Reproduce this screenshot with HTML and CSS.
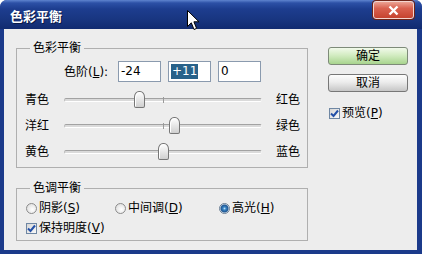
FILE: index.html
```html
<!DOCTYPE html>
<html lang="zh-CN">
<head>
    <meta charset="UTF-8">
    <title>色彩平衡</title>
    <link rel="stylesheet" href="styles.css">
</head>
<body>
    <div class="window">
        <div class="titlebar">
            <span class="title">色彩平衡</span>
            <button class="close-btn">
                <svg width="13" height="11" viewBox="0 0 13 11"><path d="M2.5 1.5 L10.5 9.5 M10.5 1.5 L2.5 9.5" stroke="#fff" stroke-width="2.4"/></svg>
            </button>
        </div>
        <div class="dialog">
            <div class="main">
                <!-- 色彩平衡 -->
                <fieldset class="group">
                    <legend>色彩平衡</legend>
                    <div class="group-body">
                        <div class="levels">
                            <label>色阶(<u>L</u>):</label>
                            <span class="field">-24</span>
                            <span class="field"><span class="selected">+11</span></span>
                            <span class="field">0</span>
                        </div>
                        <div class="sliders">
                            <div class="slider-row">
                                <span>青色</span>
                                <div class="track"><i class="tick"></i><i class="thumb" style="left: 38%"></i></div>
                                <span class="right-label">红色</span>
                            </div>
                            <div class="slider-row">
                                <span>洋红</span>
                                <div class="track"><i class="tick"></i><i class="thumb" style="left: 55.5%"></i></div>
                                <span class="right-label">绿色</span>
                            </div>
                            <div class="slider-row">
                                <span>黄色</span>
                                <div class="track"><i class="tick"></i><i class="thumb" style="left: 50%"></i></div>
                                <span class="right-label">蓝色</span>
                            </div>
                        </div>
                    </div>
                </fieldset>

                <!-- 色调平衡 -->
                <fieldset class="group group-tone">
                    <legend>色调平衡</legend>
                    <div class="group-body">
                        <div class="radios">
                            <label class="option"><span class="radio"></span>阴影(<u>S</u>)</label>
                            <label class="option"><span class="radio"></span>中间调(<u>D</u>)</label>
                            <label class="option"><span class="radio checked"></span>高光(<u>H</u>)</label>
                        </div>
                        <label class="option check-row">
                            <span class="checkbox"><svg width="9" height="9" viewBox="0 0 9 9"><path d="M1 4.5 L3.5 7 L8 1.5" fill="none" stroke="#2350a8" stroke-width="2"/></svg></span>保持明度(<u>V</u>)
                        </label>
                    </div>
                </fieldset>
            </div>

            <div class="side">
                <button class="btn btn-default">确定</button>
                <button class="btn">取消</button>
                <label class="option preview">
                    <span class="checkbox"><svg width="9" height="9" viewBox="0 0 9 9"><path d="M1 4.5 L3.5 7 L8 1.5" fill="none" stroke="#2350a8" stroke-width="2"/></svg></span>预览(<u>P</u>)
                </label>
            </div>
        </div>

        <svg class="cursor" width="13" height="21" viewBox="0 0 13 21">
            <path d="M0.5 0.5 L0.5 16.5 L4.3 12.8 L7 19.5 L9.6 18.4 L6.9 11.8 L12 11.8 Z" fill="#fff" stroke="#000" stroke-width="1"/>
        </svg>
    </div>
</body>
</html>
```

FILE: styles.css
```css
* {
    margin: 0;
    padding: 0;
    box-sizing: border-box;
}
body {
    width: 422px;
    height: 254px;
    overflow: hidden;
    font-family: "DejaVu Sans", "Noto Sans CJK SC", sans-serif;
    font-size: 12px;
    line-height: 16px;
    color: #000;
}
u {
    text-decoration: underline;
}
.window {
    position: relative;
    width: 422px;
    height: 254px;
    display: flex;
    flex-direction: column;
    padding: 0 5px 4px 4px;
    background: #1b3a8a;
    border-radius: 7px 7px 0 0;
}

/* 标题栏 */
.titlebar {
    flex: none;
    height: 29px;
    margin: 0 -5px 0 -4px;
    padding: 0 8px 0 10px;
    display: flex;
    align-items: flex-start;
    background: linear-gradient(#5f84cf 0, #2c50a6 3px, #1d3d8f 9px, #18357f 20px, #112b70 29px);
    border-radius: 7px 7px 0 0;
}
.title {
    margin-top: 8px;
    font: bold 13px/16px "Noto Sans CJK SC", sans-serif;
    color: #fff;
    text-shadow: 1px 1px #0a1a48;
}
.close-btn {
    margin: 1px 0 0 auto;
    width: 41px;
    height: 18px;
    display: flex;
    align-items: center;
    justify-content: center;
    border: 1px solid #f4d6d0;
    border-radius: 3px;
    background: linear-gradient(#eba293, #d9614f 40%, #c6432f);
    box-shadow: 0 0 0 1px #6d2418;
}

/* 对话框主体 */
.dialog {
    flex: 1;
    display: flex;
    padding: 11px 0 0 12px;
    background: #ededed;
}
.main {
    width: 292px;
    flex: none;
}
.group {
    border: 1px solid #afafaf;
    padding: 0;
}
.group legend {
    margin-left: 13px;
    padding: 0 3px;
    line-height: 16px;
}
.group-body {
    padding: 5px 0 2px 8px;
    white-space: nowrap;
}
.group-tone {
    margin-top: 12px;
}
.group-tone .group-body {
    padding: 4px 0 4px 8px;
}

/* 色阶输入 */
.levels {
    display: flex;
    align-items: center;
    height: 21px;
    padding-left: 39px;
}
.levels label {
    width: 54px;
}
.field {
    width: 43px;
    height: 21px;
    margin-left: 7px;
    padding-left: 2px;
    line-height: 19px;
    background: #fff;
    border: 1px solid #8a9aae;
}
.levels label + .field {
    margin-left: 0;
}
.selected {
    display: inline-block;
    padding: 0 1px;
    line-height: 15px;
    background: #27618a;
    color: #fff;
}

/* 滑块 */
.sliders {
    margin-top: 5px;
}
.slider-row {
    display: grid;
    grid-template-columns: 39px 198px auto;
    align-items: center;
    height: 26px;
}
.right-label {
    margin-left: 14px;
}
.track {
    position: relative;
    height: 4px;
    background: #dadada;
    border-top: 1px solid #a2a2a2;
    border-bottom: 1px solid #fff;
    border-left: 1px solid #bcbcbc;
    border-right: 1px solid #f4f4f4;
    border-radius: 2px;
}
.tick {
    position: absolute;
    left: 50%;
    top: -2px;
    width: 1px;
    height: 6px;
    background: #9a9a9a;
}
.thumb {
    position: absolute;
    top: -8px;
    width: 11px;
    height: 17px;
    margin-left: -5px;
    border: 1px solid #767676;
    border-radius: 5px 5px 2px 2px / 6px 6px 2px 2px;
    background: linear-gradient(#ffffff, #ececec 40%, #cfcfcf);
    box-shadow: inset 1px 1px #fff;
}

/* 单选 / 复选 */
.radios {
    display: grid;
    grid-template-columns: 89px 104px auto;
    height: 16px;
}
.option {
    display: flex;
    align-items: center;
    height: 16px;
}
.check-row {
    margin-top: 4px;
}
.radio {
    width: 11px;
    height: 11px;
    margin: 0 2px 0 1px;
    border: 1px solid #8c8c8c;
    border-radius: 50%;
    background: radial-gradient(circle at 60% 60%, #fff, #e3e3e3 70%, #cfcfcf);
}
.radio.checked {
    border-color: #6b7f95;
    background: radial-gradient(circle at 50% 50%, #bfe0f8 0, #3a86c4 1.5px, #1f5592 3.5px, #dce6ee 4.5px, #f4f4f4);
}
.checkbox {
    width: 11px;
    height: 11px;
    margin: 0 2px 0 1px;
    display: flex;
    align-items: center;
    justify-content: center;
    border: 1px solid #6f87a3;
    background: linear-gradient(135deg, #d6d6d6, #fafafa);
}

/* 右侧按钮 */
.side {
    width: 80px;
    margin-left: 20px;
    padding-top: 7px;
    display: flex;
    flex-direction: column;
}
.btn {
    height: 18px;
    font: inherit;
    line-height: 16px;
    color: #000;
    border: 1px solid #777;
    border-radius: 3px;
    background: linear-gradient(#fdfdfd, #ececec 45%, #c6c6c6);
}
.btn + .btn {
    margin-top: 9px;
}
.btn-default {
    border-color: #7d8a78;
    background: linear-gradient(#f1f9ea, #d3ecc2 45%, #a8d48e);
}
.preview {
    margin-top: 13px;
}

.cursor {
    position: absolute;
    left: 187px;
    top: 10px;
}
```
